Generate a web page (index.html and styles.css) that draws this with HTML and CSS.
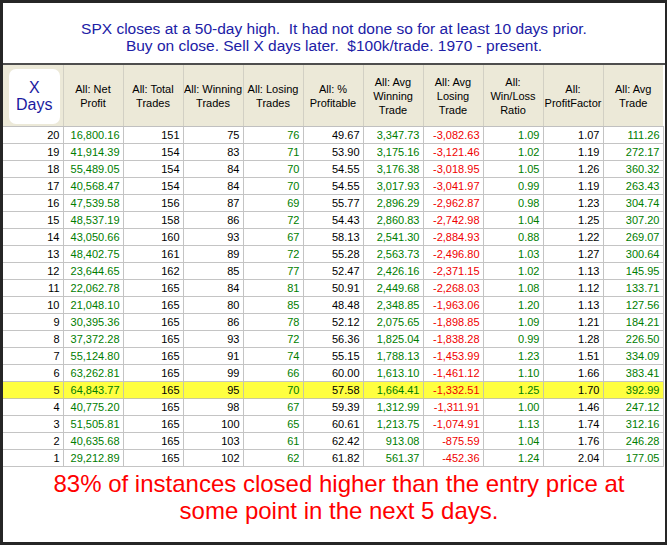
FILE: index.html
```html
<!DOCTYPE html>
<html>
<head>
<meta charset="utf-8">
<link rel="stylesheet" href="styles.css">
</head>
<body>
<div class="panel">
  <div class="title">
    <div>SPX closes at a 50-day high.&nbsp; It had not done so for at least 10 days prior.</div>
    <div>Buy on close. Sell X days later.&nbsp; $100k/trade. 1970 - present.</div>
  </div>
  <table class="grid">
    <colgroup>
      <col class="c"><col class="c"><col class="c"><col class="c"><col class="c"><col class="c">
      <col class="c"><col class="c"><col class="c"><col class="c"><col class="c">
    </colgroup>
    <thead>
      <tr>
        <th class="xd"><div class="xbox">X<br>Days</div></th>
        <th>All: Net<br>Profit</th>
        <th>All: Total<br>Trades</th>
        <th>All: Winning<br>Trades</th>
        <th>All: Losing<br>Trades</th>
        <th>All: %<br>Profitable</th>
        <th>All: Avg<br>Winning<br>Trade</th>
        <th>All: Avg<br>Losing<br>Trade</th>
        <th>All:<br>Win/Loss<br>Ratio</th>
        <th>All:<br>ProfitFactor</th>
        <th>All: Avg<br>Trade</th>
      </tr>
    </thead>
    <tbody id="rows"></tbody>
  </table>
  <div class="note">83% of instances closed higher than the entry price at<br>some point in the next 5 days.</div>
</div>
<script src="app.js"></script>
</body>
</html>
```

FILE: app.js
```js
var data = [
["20","16,800.16","151","75","76","49.67","3,347.73","-3,082.63","1.09","1.07","111.26"],
["19","41,914.39","154","83","71","53.90","3,175.16","-3,121.46","1.02","1.19","272.17"],
["18","55,489.05","154","84","70","54.55","3,176.38","-3,018.95","1.05","1.26","360.32"],
["17","40,568.47","154","84","70","54.55","3,017.93","-3,041.97","0.99","1.19","263.43"],
["16","47,539.58","156","87","69","55.77","2,896.29","-2,962.87","0.98","1.23","304.74"],
["15","48,537.19","158","86","72","54.43","2,860.83","-2,742.98","1.04","1.25","307.20"],
["14","43,050.66","160","93","67","58.13","2,541.30","-2,884.93","0.88","1.22","269.07"],
["13","48,402.75","161","89","72","55.28","2,563.73","-2,496.80","1.03","1.27","300.64"],
["12","23,644.65","162","85","77","52.47","2,426.16","-2,371.15","1.02","1.13","145.95"],
["11","22,062.78","165","84","81","50.91","2,449.68","-2,268.03","1.08","1.12","133.71"],
["10","21,048.10","165","80","85","48.48","2,348.85","-1,963.06","1.20","1.13","127.56"],
["9","30,395.36","165","86","78","52.12","2,075.65","-1,898.85","1.09","1.21","184.21"],
["8","37,372.28","165","93","72","56.36","1,825.04","-1,838.28","0.99","1.28","226.50"],
["7","55,124.80","165","91","74","55.15","1,788.13","-1,453.99","1.23","1.51","334.09"],
["6","63,262.81","165","99","66","60.00","1,613.10","-1,461.12","1.10","1.66","383.41"],
["5","64,843.77","165","95","70","57.58","1,664.41","-1,332.51","1.25","1.70","392.99"],
["4","40,775.20","165","98","67","59.39","1,312.99","-1,311.91","1.00","1.46","247.12"],
["3","51,505.81","165","100","65","60.61","1,213.75","-1,074.91","1.13","1.74","312.16"],
["2","40,635.68","165","103","61","62.42","913.08","-875.59","1.04","1.76","246.28"],
["1","29,212.89","165","102","62","61.82","561.37","-452.36","1.24","2.04","177.05"]
];
var cls = ["k","g","k","k","g","k","g","r","g","k","g"];
var tb = document.getElementById("rows");
data.forEach(function (row) {
  var tr = document.createElement("tr");
  if (row[0] === "5") tr.className = "hl";
  row.forEach(function (v, i) {
    var td = document.createElement("td");
    td.className = cls[i];
    td.textContent = v;
    tr.appendChild(td);
  });
  tb.appendChild(tr);
});
```

FILE: styles.css
```css
html, body {
  margin: 0;
  padding: 0;
  background: #262626;
}
body {
  width: 667px;
  height: 545px;
  overflow: hidden;
  padding-top: 3px;
  box-sizing: border-box;
}
.panel {
  margin-left: 3px;
  width: 662px;
  height: 539px;
  background: #ffffff;
  font-family: "Liberation Sans", Arial, sans-serif;
}
.title {
  height: 62px;
  box-sizing: border-box;
  padding-top: 17px;
  border-bottom: 2px solid #4e4e4e;
  text-align: center;
  color: #2020a6;
  font-size: 15.5px;
  line-height: 17px;
}
.grid {
  border-collapse: collapse;
  table-layout: fixed;
  width: 660px;
  font-size: 11px;
}
.grid col.c { width: 60px; }
.grid th {
  height: 58px;
  padding: 0;
  background: #ece9d8;
  font-weight: normal;
  color: #000;
  line-height: 14px;
  text-align: center;
  vertical-align: middle;
  border-left: 1px solid #d2d0c4;
  border-bottom: 1px solid #c0c0c0;
  overflow: hidden;
}
.grid th:first-child { border-left: none; }
.grid th.xd {
  padding: 2px 3px 1px 6px;
}
.xbox {
  background: #fff;
  border-radius: 7px;
  height: 55px;
  display: flex;
  align-items: center;
  justify-content: center;
  color: #1a1aa0;
  font-size: 16px;
  line-height: 17px;
}
.grid td {
  height: 16px;
  padding: 0 3px 0 0;
  text-align: right;
  line-height: 16px;
  border: 1px solid #c4c4c4;
  white-space: nowrap;
  overflow: hidden;
}
.grid td:first-child { border-left: none; }
.grid tr.hl td {
  background: #ffff40;
  border-color: #c8c8a0;
}
.k { color: #000; }
.g { color: #007d00; }
.r { color: #f00000; }
.note {
  padding: 3px 0 0 10px;
  text-align: center;
  color: #ff0000;
  font-size: 24px;
  line-height: 27px;
}
```
